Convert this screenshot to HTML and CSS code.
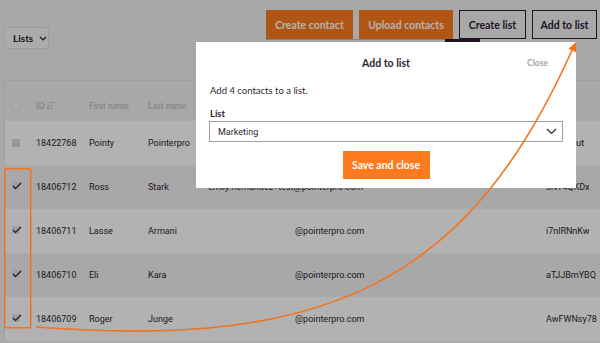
FILE: index.html
```html
<!DOCTYPE html>
<html lang="en">
  <head>
    <meta charset="UTF-8" />
    <title>Contacts</title>
    <link rel="stylesheet" href="styles.css">
  </head>
  <body>
    <header class="head">
      <button class="lists">Lists
        <svg width="8" height="5" viewBox="0 0 8 5"><path d="M1 1l3 3 3-3" fill="none" stroke="#2d1f2f" stroke-width="1.2"/></svg>
      </button>
      <div class="actions">
        <div class="btns">
          <button class="btn btn-primary w-create">Create contact</button>
          <button class="btn btn-primary w-upload">Upload contacts</button>
          <button class="btn btn-outline w-list">Create list</button>
          <button class="btn btn-outline w-add">Add to list</button>
        </div>
        <div class="tabline"><span></span></div>
      </div>
    </header>

    <!-- Contacts table -->
    <div class="table">
      <div class="row thead">
        <span class="cb cb-empty"></span>
        <span class="id-head">ID
          <svg width="9" height="9" viewBox="0 0 9 9"><path d="M2 1v7M0.5 6.5L2 8l1.5-1.5M4.5 1.5h4M4.5 4.5h3M4.5 7.5h2" fill="none" stroke="#c2c2c2" stroke-width="1"/></svg>
        </span>
        <span>First name</span>
        <span>Last name</span>
        <span></span>
        <span>Owner</span>
      </div>
      <div class="row light">
        <span class="cb cb-fill"></span>
        <span>18422768</span><span>Pointy</span><span>Pointerpro</span>
        <span>pointy@pointerpro.com</span><span>Jh2kPout</span>
      </div>
      <div class="row dark">
        <svg class="cb-check" width="10" height="10" viewBox="0 0 10 10"><rect x="0" y="1" width="8" height="8" fill="#e4e4e4"/><path d="M1 5l2.5 2.5L9 2" fill="none" stroke="#2d1f2f" stroke-width="1.2"/></svg>
        <span>18406712</span><span>Ross</span><span>Stark</span>
        <span>emily.hernandez+test@pointerpro.com</span><span>sNT4QKDx</span>
      </div>
      <div class="row light">
        <svg class="cb-check" width="10" height="10" viewBox="0 0 10 10"><rect x="0" y="1" width="8" height="8" fill="#e4e4e4"/><path d="M1 5l2.5 2.5L9 2" fill="none" stroke="#2d1f2f" stroke-width="1.2"/></svg>
        <span>18406711</span><span>Lasse</span><span>Armani</span>
        <span class="mail">@pointerpro.com</span><span>i7nlRNnKw</span>
      </div>
      <div class="row dark">
        <svg class="cb-check" width="10" height="10" viewBox="0 0 10 10"><rect x="0" y="1" width="8" height="8" fill="#e4e4e4"/><path d="M1 5l2.5 2.5L9 2" fill="none" stroke="#2d1f2f" stroke-width="1.2"/></svg>
        <span>18406710</span><span>Eli</span><span>Kara</span>
        <span class="mail">@pointerpro.com</span><span>aTJJBmYBQ</span>
      </div>
      <div class="row light">
        <svg class="cb-check" width="10" height="10" viewBox="0 0 10 10"><rect x="0" y="1" width="8" height="8" fill="#e4e4e4"/><path d="M1 5l2.5 2.5L9 2" fill="none" stroke="#2d1f2f" stroke-width="1.2"/></svg>
        <span>18406709</span><span>Roger</span><span>Junge</span>
        <span class="mail">@pointerpro.com</span><span>AwFWNsy78</span>
      </div>
    </div>

    <div class="overlay"></div>

    <!-- Add to list dialog -->
    <div class="modal">
      <div class="modal-head">
        <span></span>
        <h3>Add to list</h3>
        <button class="close">Close</button>
      </div>
      <p class="modal-text">Add 4 contacts to a list.</p>
      <label class="label">List</label>
      <div class="select">
        <span>Marketing</span>
        <svg width="11" height="7" viewBox="0 0 11 7"><path d="M1 1l4.5 4.5L10 1" fill="none" stroke="#2d1f2f" stroke-width="1.2"/></svg>
      </div>
      <div class="modal-foot">
        <button class="save">Save and close</button>
      </div>
    </div>

    <!-- annotation -->
    <svg class="annot" width="600" height="343" viewBox="0 0 600 343">
      <rect x="4.75" y="168.75" width="26" height="159" rx="1" fill="none" stroke="#f3731c" stroke-width="1.5"/>
      <path d="M36 327 C330 350 470 280 573 48" fill="none" stroke="#f3731c" stroke-width="1.6"/>
      <polygon points="576,42 576.3,52.5 568.6,48.8" fill="#f3731c"/>
    </svg>
  </body>
</html>
```

FILE: styles.css
```css
* {
  box-sizing: border-box;
}
body {
  margin: 0;
  width: 600px;
  height: 343px;
  overflow: hidden;
  position: relative;
  background-color: #f1f1f1;
  font-family: Lato, "Noto Sans", sans-serif;
  color: #2d1f2f;
}
button {
  font-family: Lato, "Noto Sans", sans-serif;
  cursor: pointer;
}

.head {
  display: flex;
  justify-content: space-between;
  align-items: flex-start;
  height: 80px;
  padding: 10px 3px 0 4px;
}
.lists {
  margin-top: 17px;
  display: flex;
  align-items: center;
  gap: 6px;
  width: 45px;
  height: 22px;
  padding: 0 0 0 8px;
  background-color: #f5f5f5;
  border: 1px solid #e1e1e1;
  border-radius: 2px;
  font-size: 10px;
  font-weight: 700;
  color: #2d1f2f;
}
.btns {
  display: flex;
  gap: 6px;
}
.btn {
  height: 29px;
  padding: 0;
  font-size: 10.5px;
  font-weight: 700;
}
.btn-primary {
  background-color: #fd7a1e;
  color: white;
  border: none;
}
.btn-outline {
  background-color: #f1f1f1;
  color: #2d1a30;
  border: 1.5px solid #2d1a30;
}
.w-create { width: 87px; }
.w-upload { width: 94px; }
.w-list { width: 67px; }
.w-add { width: 65px; }
.tabline {
  display: flex;
  justify-content: flex-end;
  height: 3px;
  margin-right: 117px;
  border-top: 1px solid #bdbdbd;
}
.tabline span {
  width: 35px;
  margin-top: -1px;
  background-color: #2d1a30;
}

.table {
  margin-left: 4px;
  border-top: 1px solid #e6e6e6;
  border-left: 1px solid #e6e6e6;
}
.row {
  display: grid;
  grid-template-columns: 31px 53px 59px 60px 338px 1fr;
  align-items: center;
  height: 44px;
  font-family: Roboto, "Liberation Sans", sans-serif;
  font-size: 9px;
  white-space: nowrap;
}
.thead {
  height: 40px;
  padding-top: 9px;
  font-family: Lato, "Noto Sans", sans-serif;
  font-size: 8.5px;
  font-weight: 700;
  color: #c2c2c2;
}
.light {
  background-color: white;
}
.dark {
  background-color: #f1f1f1;
}
.id-head {
  display: flex;
  align-items: center;
  gap: 1px;
}
.cb {
  width: 8px;
  height: 8px;
  margin-left: 7px;
}
.cb-empty {
  border: 1px solid #e3e3e3;
  background-color: #f6f6f6;
}
.cb-fill {
  background-color: #d9d9d9;
}
.cb-check {
  margin-left: 7px;
  margin-top: -3px;
}
.mail {
  padding-left: 87px;
}

.overlay {
  position: absolute;
  inset: 0;
  background-color: rgba(0, 0, 0, 0.3);
}

.modal {
  position: absolute;
  left: 196px;
  top: 42px;
  width: 380px;
  height: 146px;
  padding: 0 13px;
  background-color: white;
}
.modal-head {
  display: grid;
  grid-template-columns: 1fr auto 1fr;
  align-items: center;
  height: 41px;
}
.modal-head h3 {
  margin: 0;
  font-size: 10.5px;
  font-weight: 700;
}
.close {
  justify-self: end;
  margin-right: 15px;
  padding: 0;
  background: none;
  border: none;
  font-size: 8.5px;
  font-weight: 700;
  color: #a3a3a3;
}
.modal-text {
  margin: 2px 0 0 1px;
  font-size: 9.5px;
  line-height: 12px;
}
.label {
  display: block;
  margin: 11px 0 0 1px;
  font-size: 9.5px;
  font-weight: 700;
  line-height: 12px;
}
.select {
  display: flex;
  justify-content: space-between;
  align-items: center;
  height: 21px;
  margin-top: 1px;
  padding: 0 5px 0 8px;
  border: 1px solid #a898ab;
  font-family: Roboto, "Liberation Sans", sans-serif;
  font-size: 9px;
}
.modal-foot {
  display: flex;
  justify-content: center;
  margin-top: 9px;
}
.save {
  width: 87px;
  height: 28px;
  padding: 0;
  background-color: #fd7a1e;
  border: none;
  color: white;
  font-size: 10.5px;
  font-weight: 700;
}

.annot {
  position: absolute;
  left: 0;
  top: 0;
  pointer-events: none;
}
```
